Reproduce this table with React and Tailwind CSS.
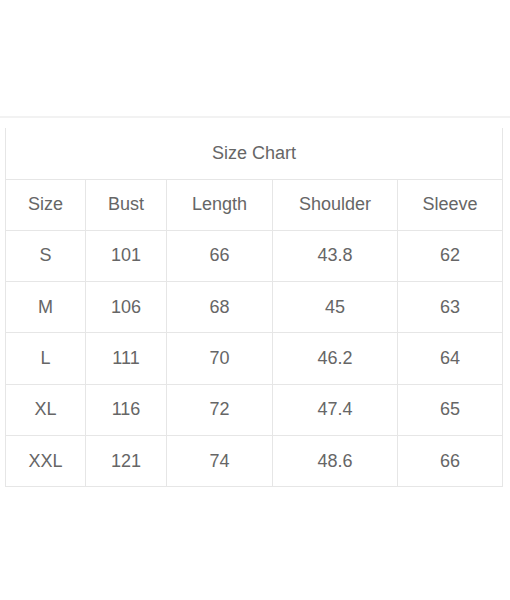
import React from "react";

const columns = ["Size", "Bust", "Length", "Shoulder", "Sleeve"];
const widths = ["w-[80px]", "w-[81px]", "w-[106px]", "w-[125px]", "w-[105px]"];

const rows = [
  ["S", "101", "66", "43.8", "62"],
  ["M", "106", "68", "45", "63"],
  ["L", "111", "70", "46.2", "64"],
  ["XL", "116", "72", "47.4", "65"],
  ["XXL", "121", "74", "48.6", "66"],
];

const App = () => {
  return (
    <div className="w-[510px] h-[600px] bg-white font-['Liberation_Sans',Arial,sans-serif] text-[#666] text-[18px]">
      <div className="h-[116px]" />
      <div className="h-[2px] bg-[#f2f2f2]" />
      <div className="h-[10px]" />

      {/* Tabel ukuran */}
      <table className="ml-[5px] w-[498px] border-collapse table-fixed">
        <colgroup>
          {widths.map((w, i) => (
            <col key={i} className={w} />
          ))}
        </colgroup>
        <thead>
          <tr>
            <th
              colSpan={5}
              className="h-[51px] border-x border-b border-[#e6e6e6] font-normal text-center"
            >
              Size Chart
            </th>
          </tr>
          <tr>
            {columns.map((col) => (
              <th
                key={col}
                className="h-[51px] border border-[#e6e6e6] font-normal text-center"
              >
                {col}
              </th>
            ))}
          </tr>
        </thead>
        <tbody>
          {rows.map((row) => (
            <tr key={row[0]}>
              {row.map((cell, i) => (
                <td
                  key={i}
                  className="h-[51.4px] border border-[#e6e6e6] text-center"
                >
                  {cell}
                </td>
              ))}
            </tr>
          ))}
        </tbody>
      </table>
    </div>
  );
};

export default App;
